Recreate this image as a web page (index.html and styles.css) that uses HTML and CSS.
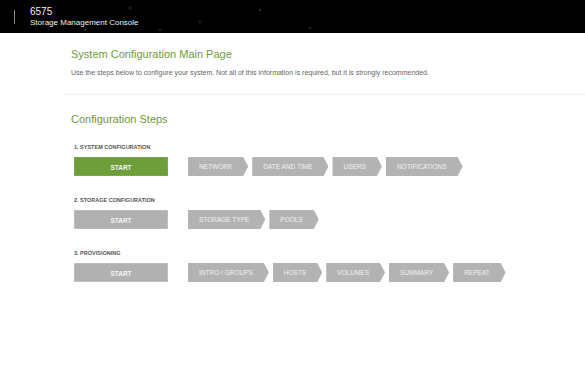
FILE: index.html
```html
<!DOCTYPE html>
<html lang="en">
<head>
    <meta charset="UTF-8">
    <meta name="viewport" content="width=device-width, initial-scale=1.0">
    <title>Storage Management Console</title>

    <link rel="stylesheet" href="styles.css">
</head>
<body>
    <div class="header">
        <div class="brand-bar"></div>
        <div class="brand">
            <div class="model">6575</div>
            <div class="console">Storage Management Console</div>
        </div>
    </div>

    <div class="main">
        <div class="intro">
            <h1>System Configuration Main Page</h1>
            <p>Use the steps below to configure your system. Not all of this information is required, but it is strongly recommended.</p>
        </div>

        <div class="steps">
            <h2>Configuration Steps</h2>

            <div class="step-group">
                <div class="group-label">1. SYSTEM CONFIGURATION</div>
                <div class="step-row">
                    <div class="btn-start active">START</div>
                    <div class="step-list">
                        <div class="step">NETWORK</div>
                        <div class="step">DATE AND TIME</div>
                        <div class="step">USERS</div>
                        <div class="step">NOTIFICATIONS</div>
                    </div>
                </div>
            </div>

            <div class="step-group">
                <div class="group-label">2. STORAGE CONFIGURATION</div>
                <div class="step-row">
                    <div class="btn-start">START</div>
                    <div class="step-list">
                        <div class="step">STORAGE TYPE</div>
                        <div class="step">POOLS</div>
                    </div>
                </div>
            </div>

            <div class="step-group">
                <div class="group-label">3. PROVISIONING</div>
                <div class="step-row">
                    <div class="btn-start">START</div>
                    <div class="step-list">
                        <div class="step">INTRO / GROUPS</div>
                        <div class="step">HOSTS</div>
                        <div class="step">VOLUMES</div>
                        <div class="step">SUMMARY</div>
                        <div class="step">REPEAT</div>
                    </div>
                </div>
            </div>
        </div>
    </div>
</body>
</html>
```

FILE: styles.css
```css
* {
    margin: 0;
    padding: 0;
    box-sizing: border-box;
}

body {
    font-family: 'Liberation Sans', Arial, Helvetica, sans-serif;
    background: #fff;
    color: #555;
}

.header {
    display: flex;
    align-items: center;
    height: 33px;
    background-color: #000;
    background-image:
        radial-gradient(circle at 130px 8px, rgba(120, 170, 60, 0.35) 0, transparent 2px),
        radial-gradient(circle at 200px 22px, rgba(120, 170, 60, 0.3) 0, transparent 2px),
        radial-gradient(circle at 260px 10px, rgba(120, 170, 60, 0.35) 0, transparent 2px),
        radial-gradient(circle at 85px 30px, rgba(150, 200, 70, 0.5) 0, transparent 1.5px),
        radial-gradient(circle at 310px 28px, rgba(120, 170, 60, 0.3) 0, transparent 2px),
        radial-gradient(circle at 160px 30px, rgba(150, 200, 70, 0.4) 0, transparent 1.5px),
        radial-gradient(circle at 55px 24px, rgba(120, 170, 60, 0.3) 0, transparent 2px);
    padding-left: 14px;
}

.brand-bar {
    width: 1px;
    height: 14px;
    background: #888;
    margin-right: 15px;
}

.brand {
    color: #eee;
}

.brand .model {
    font-size: 10px;
    line-height: 12px;
}

.brand .console {
    font-size: 8px;
    line-height: 10px;
}

.main {
    padding-left: 63px;
}

.intro {
    padding: 14px 0 16px 8px;
    border-bottom: 1px solid #eee;
}

.intro h1,
.steps h2 {
    font-size: 11px;
    font-weight: 400;
    color: #6f9a3c;
    line-height: 14px;
}

.intro p {
    margin-top: 7px;
    font-size: 7px;
    line-height: 10px;
    color: #666;
}

.steps {
    padding: 17px 0 0 8px;
}

.step-group {
    margin-top: 17px;
}

.step-group + .step-group {
    margin-top: 20px;
}

.group-label {
    padding-left: 3px;
    font-size: 5.5px;
    font-weight: 700;
    color: #555;
    line-height: 8px;
}

.step-row {
    display: flex;
    gap: 20px;
    margin-top: 6px;
    padding-left: 3px;
}

.btn-start {
    width: 94px;
    height: 19px;
    line-height: 19px;
    text-align: center;
    font-size: 6.5px;
    font-weight: 700;
    color: #f4f4f4;
    background: #b1b1b1;
    border: 1px dotted #c8c8c8;
}

.btn-start.active {
    background: #6e9e3a;
    border-color: #88b25a;
}

.step-list {
    display: flex;
    gap: 4px;
}

.step {
    height: 19px;
    line-height: 19px;
    padding: 0 16px 0 11px;
    font-size: 6.5px;
    color: #f2f2f2;
    background: #b3b3b3;
    clip-path: polygon(0 0, calc(100% - 5px) 0, 100% 50%, calc(100% - 5px) 100%, 0 100%);
}
```
